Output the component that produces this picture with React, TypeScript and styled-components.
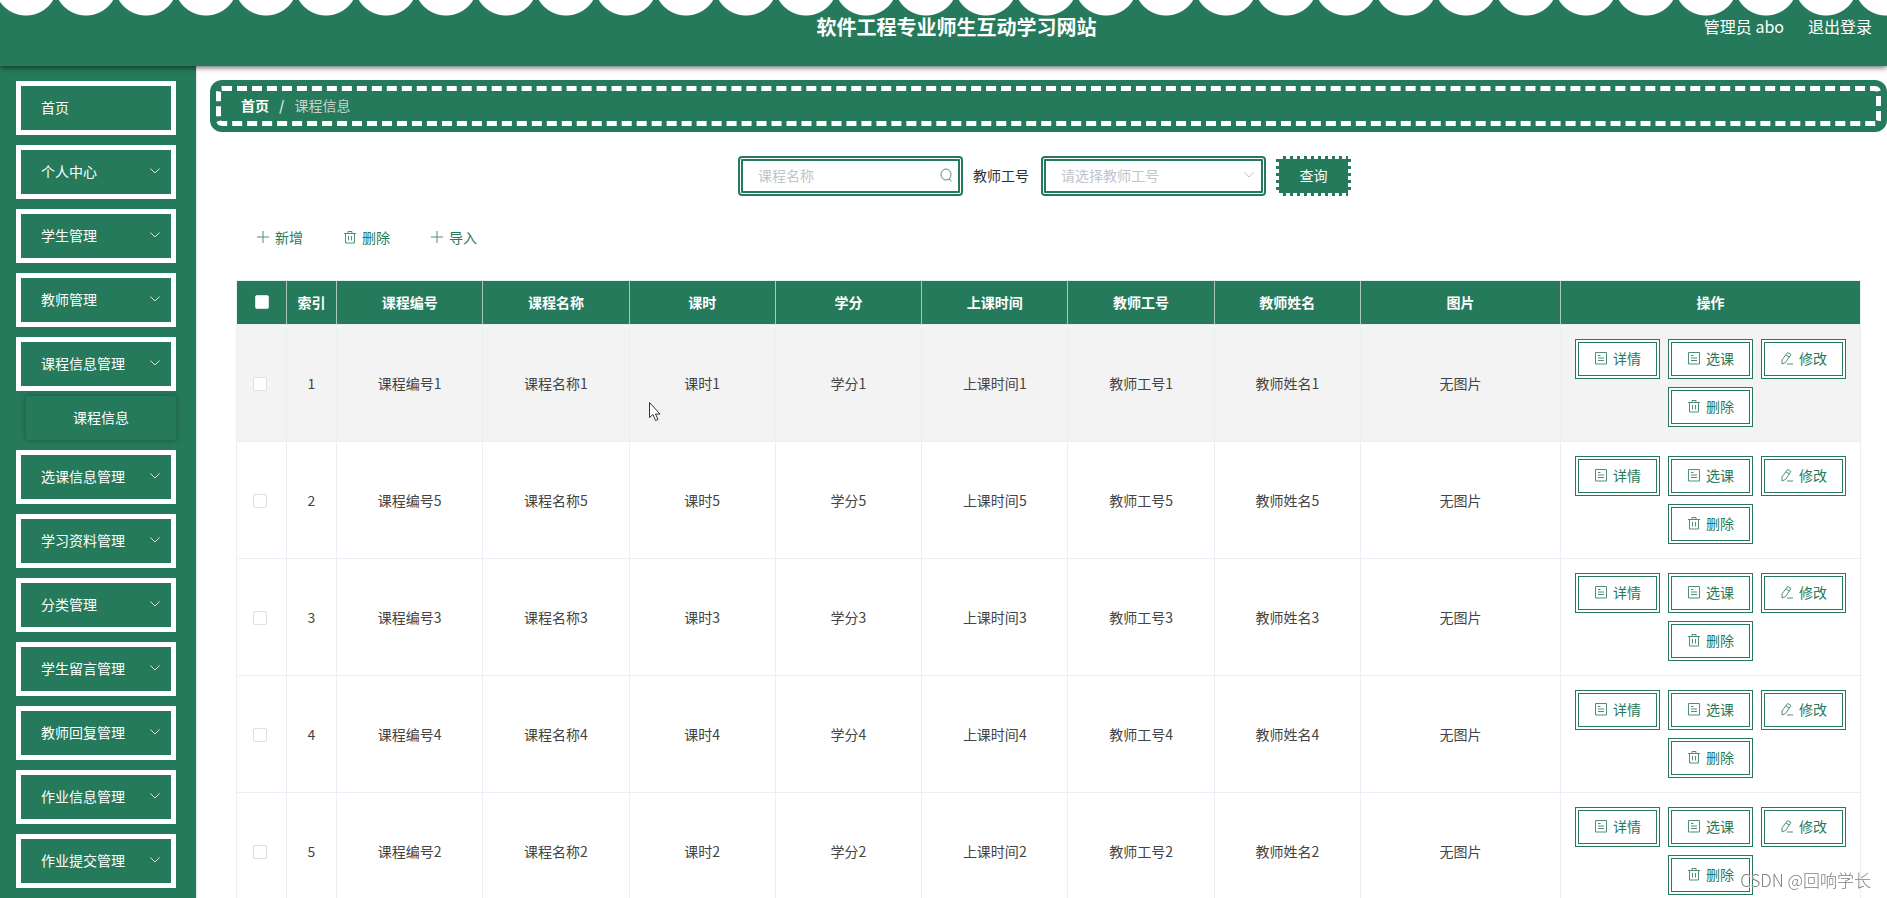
import React from "react";
import styled, { createGlobalStyle } from "styled-components";

const green = "#267a5c";
const line = "#ebeef5";

const GlobalStyle = createGlobalStyle`
  *, *::before, *::after { box-sizing: border-box; }
  body { margin: 0; background: #fff; }
  body, button, input, select {
    font-family: "Noto Sans CJK SC", "Noto Sans", sans-serif;
    font-size: 14px;
  }
`;

const Shell = styled.div`
  height: 100vh;
  display: flex;
  flex-direction: column;
  overflow: hidden;
`;

const Header = styled.header`
  flex: none;
  height: 66px;
  position: relative;
  z-index: 2;
  display: flex;
  align-items: flex-start;
  padding: 12px 15px 0 209px;
  color: #fff;
  background: radial-gradient(circle 32px at 30px -16px, #fff 31px, transparent 32px) -4px 0 / 60px 66px repeat-x ${green};
  box-shadow: 0 1px 6px rgba(0, 0, 0, 0.7);
`;

const Title = styled.h1`
  flex: 1;
  margin: 0;
  text-align: center;
  font-size: 20px;
  line-height: 30px;
  font-weight: 700;
`;

const UserArea = styled.div`
  display: flex;
  gap: 24px;
  font-size: 16px;
  line-height: 28px;
`;

const HeaderLink = styled.a`
  color: inherit;
  text-decoration: none;
`;

const Body = styled.div`
  flex: 1;
  min-height: 0;
  display: flex;
`;

const Sidebar = styled.nav`
  flex: none;
  width: 197px;
  padding: 15px 20px 0 16px;
  overflow: hidden;
  background: ${green};
  border-right: 1px solid #e6e6e6;
`;

const MenuList = styled.ul`
  list-style: none;
  margin: 0;
  padding: 0;
  display: flex;
  flex-direction: column;
  gap: 10px;
`;

const MenuItem = styled.button`
  width: 100%;
  height: 54px;
  display: flex;
  align-items: center;
  justify-content: space-between;
  padding: 0 9px 2px 20px;
  border: 5px solid #fff;
  background: ${green};
  color: #fff;
  cursor: pointer;
`;

const SubItem = styled.a`
  display: flex;
  align-items: center;
  justify-content: center;
  height: 44px;
  margin: 5px 0 0 10px;
  padding-bottom: 2px;
  color: #fff;
  text-decoration: none;
  box-shadow: 0 0 6px rgba(0, 0, 0, 0.3);
`;

const Main = styled.main`
  flex: 1;
  min-width: 0;
  overflow-y: auto;
  scrollbar-width: none;
`;

const Breadcrumb = styled.nav`
  display: flex;
  align-items: center;
  gap: 10px;
  height: 40px;
  margin: 20px 6px 30px 19px;
  padding: 0 20px 2px;
  border: 5px dashed #fff;
  border-radius: 6px;
  background: ${green};
  box-shadow: 0 0 0 6px ${green};
  color: #c6d3cc;
`;

const CrumbLink = styled.a`
  color: #fff;
  font-weight: 700;
  text-decoration: none;
`;

const Slash = styled.span`
  color: #d3dcd6;
  font-weight: 700;
`;

const Content = styled.div`
  padding: 0 26px 20px 39px;
`;

const SearchForm = styled.form`
  display: flex;
  justify-content: center;
  align-items: center;
  gap: 10px;
  padding-right: 8px;
`;

const Field = styled.div`
  display: flex;
  align-items: center;
  width: 225px;
  height: 40px;
  padding: 0 5px 2px 15px;
  border: 5px double ${green};
  border-radius: 4px;
  background: #fff;
`;

const TextInput = styled.input`
  flex: 1;
  min-width: 0;
  border: 0;
  padding: 0;
  outline: 0;
  background: transparent;
  color: #606266;
  &::placeholder { color: #c0c4cc; }
`;

const SelectInput = styled.select`
  flex: 1;
  min-width: 0;
  appearance: none;
  border: 0;
  padding: 0;
  outline: 0;
  background: transparent;
  color: #c0c4cc;
`;

const FieldLabel = styled.label`
  color: #303133;
  padding: 0 2px 2px 0;
`;

const QueryButton = styled.button`
  width: 75px;
  height: 40px;
  padding: 0 0 2px;
  border: 3px solid transparent;
  background:
    linear-gradient(${green}, ${green}) padding-box,
    repeating-linear-gradient(90deg, transparent 0 4px, ${green} 4px 7px) center / calc(100% - 6px) 100% no-repeat border-box,
    repeating-linear-gradient(180deg, ${green} 0 3px, transparent 3px 7px) center / 100% calc(100% - 6px) no-repeat border-box;
  color: #fff;
  cursor: pointer;
`;

const Toolbar = styled.div`
  display: flex;
  margin: 22px 0;
`;

const ToolButton = styled.button`
  display: flex;
  align-items: center;
  gap: 5px;
  height: 40px;
  padding: 0 20px 2px;
  border: 0;
  background: transparent;
  color: ${green};
  cursor: pointer;
`;

const Table = styled.table`
  width: 100%;
  table-layout: fixed;
  border-collapse: separate;
  border-spacing: 0;
  border: 1px solid ${line};
  border-width: 1px 0 0 1px;
  text-align: center;
`;

const Th = styled.th`
  height: 44px;
  padding: 0 0 2px;
  background: ${green};
  color: #fff;
  border-right: 1px solid #a5c8bb;
  border-bottom: 1px solid ${line};
  &:last-child { border-right-color: ${line}; }
`;

const Tr = styled.tr<{ $active?: boolean }>`
  background: ${(p) => (p.$active ? "#f3f3f3" : "#fff")};
`;

const Td = styled.td`
  height: 117px;
  padding: 14px 10px;
  color: #444;
  border-right: 1px solid ${line};
  border-bottom: 1px solid ${line};
`;

const CheckCell = styled(Td)`
  padding: 2px 3px 0 0;
`;

const Check = styled.input`
  appearance: none;
  display: block;
  width: 14px;
  height: 14px;
  margin: 0 auto;
  border: 1px solid #dcdfe6;
  border-radius: 2px;
  background: #fff;
`;

const Actions = styled.div`
  display: flex;
  flex-wrap: wrap;
  justify-content: center;
  gap: 8px;
`;

const ActionButton = styled.button`
  display: flex;
  align-items: center;
  gap: 5px;
  height: 40px;
  padding: 0 15px 2px;
  border: 4px double ${green};
  background: #fff;
  color: ${green};
  cursor: pointer;
`;

const Cursor = styled.svg`
  position: fixed;
  left: 648px;
  top: 401px;
`;

const Watermark = styled.div`
  position: fixed;
  right: 16px;
  bottom: 5px;
  font-size: 17px;
  line-height: 26px;
  font-weight: 300;
  color: #808080;
  text-shadow: 0 0 1px #fff, 1px 1px 1px #fff;
`;

const paths = {
  doc: "M1.500 1.500h11v11.500h-11zM4 4.500h2.500M4 7h6M4 9.500h6",
  trash: "M1 3.500h12M5 3.500V1.500h4v2M2.500 3.500v9.500h9V3.500M5.500 6v4.500M8.500 6v4.500",
  edit: "M7.500 1.500l3.500 2L5.500 11.500l-3.500 1.500V9zM7 13h6M6 4l3.500 2",
  plus: "M7 1v12M1 7h12",
  down: "M2.500 4.500L7 9l4.500-4.500",
  search: "M12 6.500a5 5.500 0 1 1-10 0a5 5.500 0 1 1 10 0M10 11l2.500 2",
};

function Icon({ name, color = "#4f8f78" }: { name: keyof typeof paths; color?: string }) {
  return (
    <svg width="14" height="14" viewBox="0 0 14 14" fill="none" stroke={color} aria-hidden="true">
      <path d={paths[name]} />
    </svg>
  );
}

const menu: { label: string; child?: string; leaf?: boolean }[] = [
  { label: "首页", leaf: true },
  { label: "个人中心" },
  { label: "学生管理" },
  { label: "教师管理" },
  { label: "课程信息管理", child: "课程信息" },
  { label: "选课信息管理" },
  { label: "学习资料管理" },
  { label: "分类管理" },
  { label: "学生留言管理" },
  { label: "教师回复管理" },
  { label: "作业信息管理" },
  { label: "作业提交管理" },
];

const fields = ["课程编号", "课程名称", "课时", "学分", "上课时间", "教师工号", "教师姓名"];
const records = [1, 5, 3, 4, 2];
const actions: [keyof typeof paths, string][] = [
  ["doc", "详情"],
  ["doc", "选课"],
  ["edit", "修改"],
  ["trash", "删除"],
];

export default function App() {
  return (
    <Shell>
      <GlobalStyle />
      <Header>
        <Title>软件工程专业师生互动学习网站</Title>
        <UserArea>
          <span>管理员 abo</span>
          <HeaderLink href="#logout">退出登录</HeaderLink>
        </UserArea>
      </Header>
      <Body>
        <Sidebar>
          <MenuList>
            {menu.map((m) => (
              <li key={m.label}>
                <MenuItem type="button">
                  {m.label}
                  {!m.leaf && <Icon name="down" color="#dcebe5" />}
                </MenuItem>
                {m.child && <SubItem href="#course">{m.child}</SubItem>}
              </li>
            ))}
          </MenuList>
        </Sidebar>
        <Main>
          <Breadcrumb>
            <CrumbLink href="#home">首页</CrumbLink>
            <Slash>/</Slash>
            <span>课程信息</span>
          </Breadcrumb>
          <Content>
            <SearchForm onSubmit={(e) => e.preventDefault()}>
              <Field>
                <TextInput placeholder="课程名称" aria-label="课程名称" />
                <Icon name="search" />
              </Field>
              <FieldLabel htmlFor="teacher">教师工号</FieldLabel>
              <Field>
                <SelectInput id="teacher" defaultValue="">
                  <option value="">请选择教师工号</option>
                </SelectInput>
                <Icon name="down" color="#c0c4cc" />
              </Field>
              <QueryButton type="submit">查询</QueryButton>
            </SearchForm>
            <Toolbar>
              <ToolButton type="button"><Icon name="plus" />新增</ToolButton>
              <ToolButton type="button"><Icon name="trash" />删除</ToolButton>
              <ToolButton type="button"><Icon name="plus" />导入</ToolButton>
            </Toolbar>
            <Table>
              <colgroup>
                <col width="50" />
                <col width="50" />
                {fields.map((f) => <col key={f} />)}
                <col width="200" />
                <col width="300" />
              </colgroup>
              <thead>
                <tr>
                  <Th><Check type="checkbox" aria-label="全选" /></Th>
                  <Th>索引</Th>
                  {fields.map((f) => <Th key={f}>{f}</Th>)}
                  <Th>图片</Th>
                  <Th>操作</Th>
                </tr>
              </thead>
              <tbody>
                {records.map((n, i) => (
                  <Tr key={n} $active={i === 0}>
                    <CheckCell><Check type="checkbox" aria-label={`选择 ${i + 1}`} /></CheckCell>
                    <Td>{i + 1}</Td>
                    {fields.map((f) => <Td key={f}>{f}{n}</Td>)}
                    <Td>无图片</Td>
                    <Td>
                      <Actions>
                        {actions.map(([icon, label]) => (
                          <ActionButton key={label} type="button"><Icon name={icon} />{label}</ActionButton>
                        ))}
                      </Actions>
                    </Td>
                  </Tr>
                ))}
              </tbody>
            </Table>
          </Content>
        </Main>
      </Body>
      <Cursor width="14" height="21" viewBox="0 0 14 21" aria-hidden="true">
        <path d="M1.500 1.500v15l3.500-3 2.500 6 2.500-1-2.500-5.500h4.500z" fill="#fff" stroke="#333" />
      </Cursor>
      <Watermark>CSDN @回响学长</Watermark>
    </Shell>
  );
}
